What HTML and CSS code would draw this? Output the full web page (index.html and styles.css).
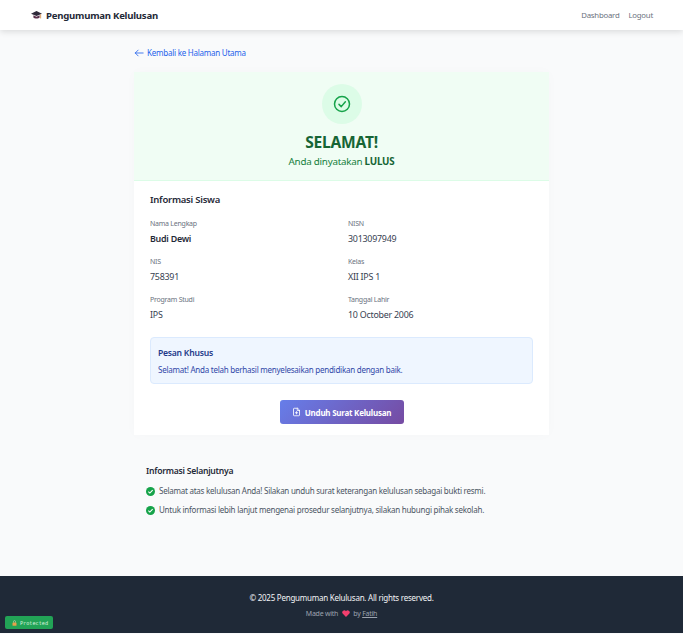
FILE: index.html
```html
<!DOCTYPE html>
<html>
<head>
    <title>Pengumuman Kelulusan</title>
    <link rel="stylesheet" href="styles.css">
</head>
<body>
    <header class="navbar">
        <div class="brand">
            <svg class="brand-icon" viewBox="0 0 16 14" width="11" height="10">
                <path d="M8 1 L16 5 L8 8.5 L0 5 Z" fill="#2f2a3a"/>
                <path d="M3.5 7.5 V10.5 C5 12.5 11 12.5 12.5 10.5 V7.5 L8 9.7 Z" fill="#5a2f4a"/>
                <path d="M14 6 V12" stroke="#e0a060" stroke-width="1.4"/>
            </svg>
            <span>Pengumuman Kelulusan</span>
        </div>
        <nav class="nav-links">
            <a href="#">Dashboard</a>
            <a href="#">Logout</a>
        </nav>
    </header>

    <main class="content">
        <a class="back-link" href="#">
            <svg viewBox="0 0 24 24" width="10" height="10" fill="none" stroke="currentColor" stroke-width="2" stroke-linecap="round" stroke-linejoin="round">
                <path d="M22 12H3M10 5l-7 7 7 7"/>
            </svg>
            Kembali ke Halaman Utama
        </a>

        <section class="result-card">
            <div class="result-head">
                <div class="check-circle">
                    <svg viewBox="0 0 24 24" width="18" height="18" fill="none" stroke="#16a34a" stroke-width="2" stroke-linecap="round" stroke-linejoin="round">
                        <circle cx="12" cy="12" r="10"/>
                        <path d="M8 12.5l3 3 5.5-6.5"/>
                    </svg>
                </div>
                <h1 class="result-title">SELAMAT!</h1>
                <p class="result-sub">Anda dinyatakan <strong>LULUS</strong></p>
            </div>

            <div class="result-body">
                <h2 class="section-title">Informasi Siswa</h2>
                <div class="info-grid">
                    <div>
                        <div class="info-label">Nama Lengkap</div>
                        <div class="info-value info-name">Budi Dewi</div>
                    </div>
                    <div>
                        <div class="info-label">NISN</div>
                        <div class="info-value">3013097949</div>
                    </div>
                    <div>
                        <div class="info-label">NIS</div>
                        <div class="info-value">758391</div>
                    </div>
                    <div>
                        <div class="info-label">Kelas</div>
                        <div class="info-value">XII IPS 1</div>
                    </div>
                    <div>
                        <div class="info-label">Program Studi</div>
                        <div class="info-value">IPS</div>
                    </div>
                    <div>
                        <div class="info-label">Tanggal Lahir</div>
                        <div class="info-value">10 October 2006</div>
                    </div>
                </div>

                <div class="message-box">
                    <h3 class="message-title">Pesan Khusus</h3>
                    <p class="message-text">Selamat! Anda telah berhasil menyelesaikan pendidikan dengan baik.</p>
                </div>

                <div class="download-row">
                    <a class="download-btn" href="#">
                        <svg viewBox="0 0 24 24" width="9" height="10" fill="none" stroke="currentColor" stroke-width="2.2" stroke-linecap="round" stroke-linejoin="round">
                            <path d="M14 2H6a2 2 0 0 0-2 2v16a2 2 0 0 0 2 2h12a2 2 0 0 0 2-2V8z"/>
                            <path d="M14 2v6h6M12 11v6M9 14h6"/>
                        </svg>
                        Unduh Surat Kelulusan
                    </a>
                </div>
            </div>
        </section>

        <section class="next-info">
            <h2 class="next-title">Informasi Selanjutnya</h2>
            <ul class="next-list">
                <li>
                    <svg viewBox="0 0 16 16" width="9" height="9"><circle cx="8" cy="8" r="8" fill="#16a34a"/><path d="M4.2 8.3l2.6 2.5 5-5.2" fill="none" stroke="#fff" stroke-width="2"/></svg>
                    Selamat atas kelulusan Anda! Silakan unduh surat keterangan kelulusan sebagai bukti resmi.
                </li>
                <li>
                    <svg viewBox="0 0 16 16" width="9" height="9"><circle cx="8" cy="8" r="8" fill="#16a34a"/><path d="M4.2 8.3l2.6 2.5 5-5.2" fill="none" stroke="#fff" stroke-width="2"/></svg>
                    Untuk informasi lebih lanjut mengenai prosedur selanjutnya, silakan hubungi pihak sekolah.
                </li>
            </ul>
        </section>
    </main>

    <footer class="footer">
        <p class="copyright">© 2025 Pengumuman Kelulusan. All rights reserved.</p>
        <p class="made-with">Made with <svg class="heart" viewBox="0 0 16 14" width="8" height="7"><path d="M8 14 L1.2 7.2 A4 4 0 0 1 8 2.6 A4 4 0 0 1 14.8 7.2 Z" fill="#f43f6e"/></svg> by <a href="#">Fatih</a></p>
    </footer>

    <div class="protected-badge">
        <svg viewBox="0 0 10 12" width="5" height="6"><rect x="1" y="5" width="8" height="6.5" rx="1" fill="#e8a04a"/><path d="M3 5V3.2a2 2 0 0 1 4 0V5" fill="none" stroke="#d9d9c0" stroke-width="1.2"/></svg>
        Protected
    </div>
</body>
</html>
```

FILE: styles.css
```css
* {
    box-sizing: border-box;
}
html, body {
    height: 100%;
}
body {
    margin: 0;
    background-color: #f9fafb;
    color: #1f2937;
    font-family: "Noto Sans", "Open Sans", sans-serif;
    letter-spacing: -0.015em;
    display: flex;
    flex-direction: column;
    min-height: 634px;
}
a {
    text-decoration: none;
    color: inherit;
}
h1, h2, h3, p, ul {
    margin: 0;
    padding: 0;
}

.navbar {
    height: 30px;
    padding: 0 30px 0 31px;
    background-color: #fff;
    box-shadow: 0 2px 6px rgba(0, 0, 0, 0.12);
    display: flex;
    align-items: center;
    justify-content: space-between;
}
.brand {
    display: flex;
    align-items: center;
    gap: 4px;
    font-size: 9.6px;
    font-weight: 700;
    color: #1f2937;
}
.nav-links {
    display: flex;
    gap: 9px;
    font-size: 7.8px;
    color: #6b7280;
}

.content {
    flex: 1;
    width: 415px;
    margin-left: 134px;
    padding-top: 17px;
}
.back-link {
    display: flex;
    align-items: center;
    gap: 3px;
    height: 11px;
    font-size: 8px;
    color: #2563eb;
}

.result-card {
    margin-top: 14px;
    background-color: #fff;
    box-shadow: 0 0 12px rgba(0, 0, 0, 0.02);
}
.result-head {
    height: 109px;
    padding-top: 12px;
    background-color: #f0fdf4;
    border-bottom: 1px solid #dcfce7;
    text-align: center;
}
.check-circle {
    width: 40px;
    height: 40px;
    margin: 0 auto;
    border-radius: 50%;
    background-color: #dcfce7;
    display: flex;
    align-items: center;
    justify-content: center;
}
.result-title {
    margin-top: 7px;
    font-size: 15.6px;
    line-height: 22px;
    font-weight: 700;
    color: #166534;
}
.result-sub {
    margin-top: 2px;
    font-size: 9.8px;
    line-height: 14px;
    color: #15803d;
}
.result-sub strong {
    color: #166534;
}

.result-body {
    padding: 12px 16px 11px;
}
.section-title {
    font-size: 9.5px;
    line-height: 14px;
    font-weight: 600;
    color: #1f2937;
}
.info-grid {
    margin-top: 11px;
    display: grid;
    grid-template-columns: 198px 1fr;
    row-gap: 11px;
}
.info-label {
    font-size: 7px;
    line-height: 11px;
    color: #6b7280;
}
.info-value {
    margin-top: 3px;
    font-size: 8.9px;
    line-height: 13px;
    color: #374151;
}
.info-name {
    font-weight: 600;
    color: #1f2937;
}

.message-box {
    margin-top: 16px;
    height: 47px;
    padding: 9px 7px;
    background-color: #eff6ff;
    border: 1px solid #dbeafe;
    border-radius: 4px;
}
.message-title {
    font-size: 8.6px;
    line-height: 12px;
    font-weight: 600;
    color: #1e3a8a;
}
.message-text {
    margin-top: 5px;
    font-size: 8px;
    line-height: 12px;
    color: #2f47a8;
}

.download-row {
    margin-top: 16px;
    display: flex;
    justify-content: center;
}
.download-btn {
    width: 124px;
    height: 24px;
    border-radius: 3px;
    background: linear-gradient(135deg, #667eea, #764ba2);
    color: #fff;
    font-size: 8px;
    font-weight: 700;
    display: flex;
    align-items: center;
    justify-content: center;
    gap: 4px;
}

.next-info {
    margin-top: 30px;
    margin-left: 12px;
}
.next-title {
    font-size: 8.6px;
    line-height: 13px;
    font-weight: 600;
    color: #1f2937;
}
.next-list {
    margin-top: 7px;
    list-style: none;
    display: flex;
    flex-direction: column;
    gap: 7px;
    font-size: 8px;
    line-height: 12px;
    color: #4b5563;
    white-space: nowrap;
}
.next-list li {
    display: flex;
    align-items: center;
    gap: 4px;
}

.footer {
    height: 57px;
    margin-bottom: 1px;
    padding-top: 16px;
    background-color: #1f2937;
    text-align: center;
}
.copyright {
    font-size: 8px;
    line-height: 12px;
    color: #f3f4f6;
}
.made-with {
    margin-top: 4px;
    font-size: 7px;
    line-height: 11px;
    color: #9ca3af;
}
.made-with a {
    text-decoration: underline;
}
.heart {
    margin: 0 2px;
    vertical-align: -1px;
}

.protected-badge {
    position: fixed;
    left: 5px;
    bottom: 5px;
    width: 48px;
    height: 13px;
    padding-left: 7px;
    border-radius: 2px;
    background-color: #22a356;
    color: #d9f2df;
    font-family: "DejaVu Sans Mono", monospace;
    font-size: 5.2px;
    letter-spacing: 0;
    display: flex;
    align-items: center;
    gap: 3px;
}
```
